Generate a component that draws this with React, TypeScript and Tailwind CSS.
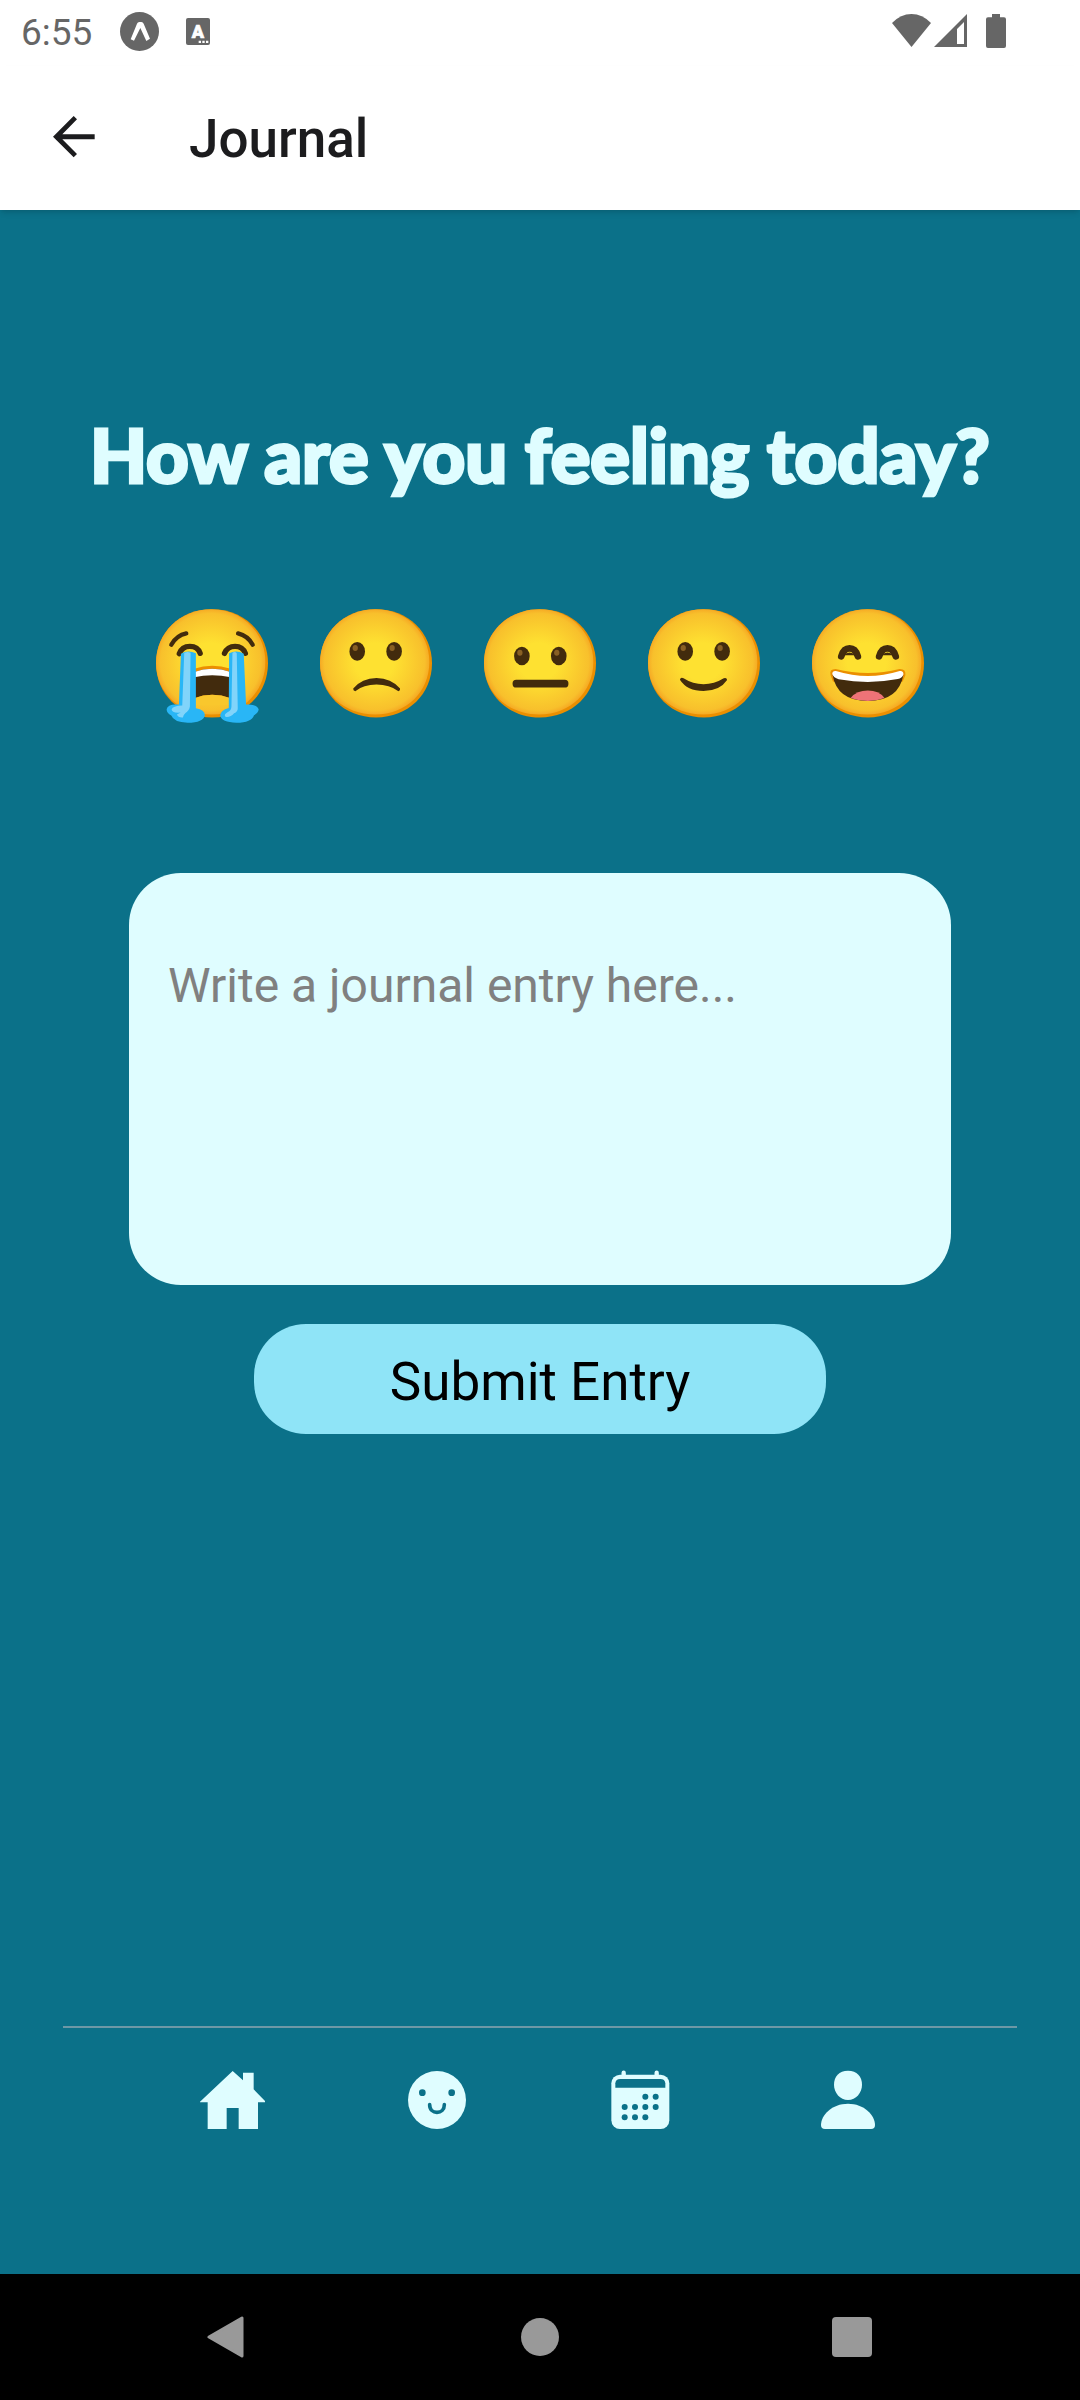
import React, { useState } from "react";

function StatusBar() {
  return (
    <div className="flex h-[66px] items-start justify-between bg-white pl-[21px] pr-[74px] text-[#666666]">
      <div className="flex items-start">
        <time className="pt-3 text-[37px] leading-[42px]">6:55</time>
        <svg viewBox="360 36 117 117" className="ml-7 mt-3 size-[39px]" aria-hidden="true">
          <circle cx="418.500" cy="94.500" r="58.500" fill="currentColor" />
          <path d="M392 118L411 71Q413 66 418 66H424Q429 66 431 71L450 116L439 123L421 84L402 122Z" fill="#fff" />
        </svg>
        <svg viewBox="558 54 72 81" className="ml-[27px] mt-[18px] h-[27px] w-6" aria-hidden="true">
          <rect x="558" y="54" width="72" height="81" rx="6" fill="currentColor" />
          <text x="594" y="114" textAnchor="middle" fontSize="54" fontWeight="900" fill="#fff" stroke="#fff" strokeWidth="2">A</text>
          <path d="M596 122h7v7h-7zM607 122h7v7h-7zM618 122h7v7h-7z" fill="#fff" />
        </svg>
      </div>
      <div className="flex items-start pt-3.5">
        <svg viewBox="96 42 117 99" className="h-[33px] w-[39px]" aria-hidden="true">
          <path d="M154.500 141L96 69Q122 42 154.500 42T213 69Z" fill="currentColor" />
        </svg>
        <svg viewBox="222 42 99 99" className="ml-[3px] size-[33px]" aria-hidden="true">
          <path fillRule="evenodd" d="M222 141L321 42V141ZM291 87V132H312V66Z" fill="currentColor" />
        </svg>
        <svg viewBox="378 42 60 102" className="ml-[19px] h-[34px] w-5" aria-hidden="true">
          <path d="M396 42h24v10h12q6 0 6 6v80q0 6-6 6h-48q-6 0-6-6V58q0-6 6-6h12z" fill="currentColor" />
        </svg>
      </div>
    </div>
  );
}

function Header() {
  return (
    <header className="z-10 flex h-36 items-center bg-white pl-[53px] pt-0.5 text-[#1c1c1e] shadow-md">
      <button type="button" aria-label="Back" className="mb-1">
        <svg viewBox="159 347 126 126" className="size-[42px]" aria-hidden="true">
          <path d="M284 402H187L231 357L221 347L159 409L221 471L231 461L187 417H284Z" fill="currentColor" />
        </svg>
      </button>
      <h1 className="ml-[94px] text-[53px] font-medium leading-[60px]">Journal</h1>
    </header>
  );
}

/* Round yellow head shared by every mood. `left` is the head's left edge. */
function Face({ left, id, children }: { left: number; id: string; children: React.ReactNode }) {
  return (
    <svg viewBox={`${left} 57 337 342`} className="h-[114px] w-28" aria-hidden="true">
      <defs>
        <radialGradient id={id} cx="50%" cy="50%" r="51%">
          <stop offset="0.35" stopColor="#fee131" />
          <stop offset="0.9" stopColor="#f8c02c" />
          <stop offset="1" stopColor="#f5a623" />
        </radialGradient>
      </defs>
      <g transform={`translate(${left} 57)`}>
        <path d="M168.500 0C265 0 337 70 337 163S265 326 168.500 326S0 256 0 163S72 0 168.500 0Z" fill="#eb8f00" />
        <path d="M166 0C258 0 329 69 329 159S260 317 166 317S0 251 0 161S73 0 166 0Z" fill={`url(#${id})`} />
      </g>
      {children}
    </svg>
  );
}

function Eyes({ x, y }: { x: number; y: number }) {
  return (
    <g>
      <ellipse cx={x} cy={y} rx="23.500" ry="28" fill="#422b0d" />
      <ellipse cx={x + 111} cy={y} rx="23.500" ry="28" fill="#422b0d" />
      <ellipse cx={x - 6} cy={y - 10} rx="8" ry="9" fill="#896024" />
      <ellipse cx={x + 105} cy={y - 10} rx="8" ry="9" fill="#896024" />
    </g>
  );
}

function Crying() {
  return (
    <Face left={45} id="mood-crying">
      <path d="M160 236Q213 218 270 236V325H160Z" fill="#eb8f00" />
      <path d="M160 246Q213 226 270 246V325Q213 304 160 325Z" fill="#422b0d" />
      <path d="M160 246Q213 226 270 246V262Q213 250 160 262Z" fill="#fff" />
      <path d="M160 325Q213 304 270 325V345H160Z" fill="#f9c72d" />
      <path d="M91 164Q107 136 136 130M292 130Q321 137 336 164" fill="none" stroke="#422b0d" strokeWidth="13" strokeLinecap="round" />
      <path d="M115 191Q123 169 147 169T178 190M251 190Q260 169 283 169T314 190" fill="none" stroke="#422b0d" strokeWidth="16" strokeLinecap="round" />
      <path d="M120 191Q142 178 165 190V355Q192 360 192 376Q188 398 140 399Q98 397 91 377Q77 370 77 358Q80 341 114 344Z" fill="#29b6f6" />
      <path d="M265 190Q287 178 309 191L316 344Q350 342 354 359Q352 370 340 376Q333 398 287 399Q242 397 238 377Q239 361 264 354Z" fill="#29b6f6" />
      <path d="M130 188Q141 183 149 188L147 350Q145 362 133 370Q126 376 126 383Q111 384 108 374L119 368Q92 370 92 359Q95 348 124 347Z" fill="#81d4fa" />
      <path d="M275 188Q284 183 288 190L291 355Q291 366 280 370Q268 384 254 381Q248 374 260 367Q272 362 272 350Z" fill="#81d4fa" />
    </Face>
  );
}

function Sad() {
  return (
    <Face left={537} id="mood-sad">
      <Eyes x={649} y={184} />
      <path d="M637 296Q663 264 707 264T778 296Q779 303 773 304Q746 284 707 284T643 304Q636 303 637 296Z" fill="#422b0d" />
    </Face>
  );
}

function Neutral() {
  return (
    <Face left={72} id="mood-neutral">
      <Eyes x={186} y={198} />
      <rect x="158" y="269" width="168" height="24" rx="11" fill="#422b0d" />
    </Face>
  );
}

function Smiling() {
  return (
    <Face left={564} id="mood-smiling">
      <Eyes x={676} y={184} />
      <path d="M660 269Q662 261 671 265Q699 283 731 283T792 265Q801 262 802 270Q780 303 731 303T660 269Z" fill="#422b0d" />
    </Face>
  );
}

function Laughing() {
  return (
    <Face left={99} id="mood-laughing">
      <path d="M187 199Q194 175 212 175T237 199M301 199Q308 175 326 175T351 199" fill="none" stroke="#422b0d" strokeWidth="20" strokeLinecap="round" strokeLinejoin="round" />
      <path d="M194 196Q212 179 230 196ZM308 196Q326 179 344 196Z" fill="#422b0d" />
      <path d="M155 256Q150 237 170 237Q219 249 267 249T362 237Q382 236 380 256L372 275Q267 295 162 275Z" fill="#eb8f00" />
      <path d="M161 254Q174 333 267 333T374 254Q267 280 161 254Z" fill="#422b0d" />
      <path d="M160 252Q160 242 171 243Q220 258 267 258T363 243Q375 242 374 254Q370 264 357 267Q310 276 267 276T179 268Q164 263 160 252Z" fill="#fff" />
      <path d="M215 324Q234 302 267 302T317 324Q294 333 267 333T215 324Z" fill="#ee7377" />
    </Face>
  );
}

const moods = [
  { name: "Crying", Icon: Crying },
  { name: "Sad", Icon: Sad },
  { name: "Neutral", Icon: Neutral },
  { name: "Smiling", Icon: Smiling },
  { name: "Laughing", Icon: Laughing },
];

function HomeIcon() {
  return (
    <svg viewBox="478 184 198 180" className="h-[60px] w-[66px]" aria-hidden="true">
      <path d="M579 187L610 215V192H642V242L678 279V281H655V361H597V298H561V361H504V281H481V279Z" fill="currentColor" />
    </svg>
  );
}

function SmileIcon() {
  return (
    <svg viewBox="1092 181 198 180" className="h-[60px] w-[66px]" aria-hidden="true">
      <circle cx="1191" cy="271" r="87" fill="currentColor" />
      <circle cx="1147" cy="249" r="10" fill="#0b7189" />
      <circle cx="1235" cy="249" r="10" fill="#0b7189" />
      <path d="M1169 285C1169 316 1213 316 1213 285" fill="none" stroke="#0b7189" strokeWidth="11" strokeLinecap="round" />
    </svg>
  );
}

function CalendarIcon() {
  const dots = [
    [315, 264], [346, 264],
    [253, 295], [284, 295], [315, 295], [346, 295],
    [253, 326], [284, 326], [315, 326],
  ];
  return (
    <svg viewBox="209 184 198 180" className="h-[60px] w-[66px]" aria-hidden="true">
      <path d="M250 192V204M349 192V204" stroke="currentColor" strokeWidth="13" strokeLinecap="round" />
      <rect x="213" y="198" width="174" height="163" rx="26" fill="currentColor" />
      <path d="M225 237V224Q226 211 240 211H360Q374 211 375 224V237Z" fill="#0b7189" />
      {dots.map(([x, y]) => (
        <circle key={`${x}-${y}`} cx={x} cy={y} r="9" fill="#0b7189" />
      ))}
    </svg>
  );
}

function PersonIcon() {
  return (
    <svg viewBox="825 184 198 180" className="h-[60px] w-[66px]" aria-hidden="true">
      <path d="M924 186C951 186 966 203 966 228C966 252 948 274 924 274S882 252 882 228C882 203 897 186 924 186Z" fill="currentColor" />
      <path d="M924 285C972 285 1005 319 1005 349Q1005 361 993 361H855Q843 361 843 349C843 319 876 285 924 285Z" fill="currentColor" />
    </svg>
  );
}

const tabs = [
  { name: "Home", Icon: HomeIcon },
  { name: "Mood", Icon: SmileIcon },
  { name: "Calendar", Icon: CalendarIcon },
  { name: "Profile", Icon: PersonIcon },
];

function SystemNav() {
  return (
    <nav aria-label="System" className="grid h-[126px] grid-cols-3 place-items-center bg-black px-[70px] text-[#999999]">
      <button type="button" aria-label="System back">
        <svg viewBox="0 0 42 42" className="size-[42px]" aria-hidden="true">
          <path d="M36 2V40L3 21Z" fill="currentColor" stroke="currentColor" strokeWidth="3" strokeLinejoin="round" />
        </svg>
      </button>
      <button type="button" aria-label="System home">
        <svg viewBox="0 0 42 42" className="size-[42px]" aria-hidden="true">
          <circle cx="21" cy="21" r="19" fill="currentColor" />
        </svg>
      </button>
      <button type="button" aria-label="Recent apps">
        <svg viewBox="0 0 42 42" className="size-[42px]" aria-hidden="true">
          <rect x="0" y="1" width="40" height="40" rx="4" fill="currentColor" />
        </svg>
      </button>
    </nav>
  );
}

export default function App() {
  const [entry, setEntry] = useState("");

  return (
    <div className="flex min-h-screen flex-col bg-[#0b7189] font-[Roboto,sans-serif]">
      <StatusBar />
      <Header />
      <main className="flex flex-1 flex-col items-center pt-[190px]">
        <h2 className="text-center font-[Lato,sans-serif] text-[74px] font-black leading-[110px] text-[#dffdff] [-webkit-text-stroke:3px_#dffdff]">
          How are you feeling today?
        </h2>
        <div className="mt-[99px] flex justify-center gap-[52px]">
          {moods.map(({ name, Icon }) => (
            <button key={name} type="button" aria-label={name}>
              <Icon />
            </button>
          ))}
        </div>
        <form className="mt-[150px] flex w-full flex-col items-center gap-[39px] px-[129px]" onSubmit={(e) => e.preventDefault()}>
          <textarea
            aria-label="Journal entry"
            placeholder="Write a journal entry here..."
            value={entry}
            onChange={(e) => setEntry(e.target.value)}
            className="block h-[412px] w-full resize-none rounded-[52px] bg-[#dffdff] px-[39px] pt-[85px] text-[48px] leading-[56px] text-black outline-none placeholder:text-[#808080]"
          />
          <button type="submit" className="h-[110px] w-[572px] rounded-[52px] bg-[#8fe4f7] pt-1.5 text-[53px] leading-[60px] text-black">
            Submit Entry
          </button>
        </form>
      </main>
      <nav aria-label="Main" className="mx-[63px] border-t-2 border-[#6d98a6] px-[66px] pb-36 pt-[42px]">
        <div className="grid grid-cols-4 justify-items-center text-[#dffdff]">
          {tabs.map(({ name, Icon }) => (
            <button key={name} type="button" aria-label={name}>
              <Icon />
            </button>
          ))}
        </div>
      </nav>
      <SystemNav />
    </div>
  );
}
